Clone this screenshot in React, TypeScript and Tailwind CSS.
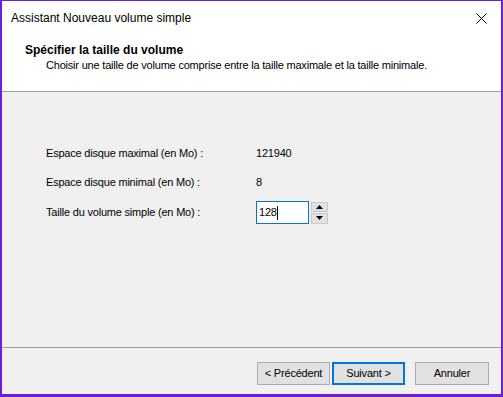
const font = { fontFamily: '"Liberation Sans", Arial, sans-serif' }

function Spinner() {
  return (
    <div className="flex flex-col gap-[1px] ml-[2px] h-[22px] w-[17px]">
      <button className="flex-1 flex items-center justify-center bg-[#e1e1e1] border border-[#c8c8c8]">
        <svg width="7" height="4" viewBox="0 0 7 4">
          <path d="M0 4 L3.5 0 L7 4 Z" fill="#000" />
        </svg>
      </button>
      <button className="flex-1 flex items-center justify-center bg-[#e1e1e1] border border-[#c8c8c8]">
        <svg width="7" height="4" viewBox="0 0 7 4">
          <path d="M0 0 L7 0 L3.5 4 Z" fill="#000" />
        </svg>
      </button>
    </div>
  )
}

function Row({ label, children }: { label: string; children: React.ReactNode }) {
  return (
    <div className="flex items-center">
      <div className="w-[210px]">{label}</div>
      {children}
    </div>
  )
}

export default function App() {
  return (
    <div
      className="w-[503px] h-[397px] bg-[#6b1fd6] pt-[1px] pl-[2px] pr-[2px] pb-[3px] text-[11px] tracking-[-0.2px] text-black"
      style={font}
    >
      <div className="h-full flex flex-col bg-[#f0f0f0]">
        <div className="h-[34px] bg-white flex items-center pl-[9px] pr-[14px] text-[12px] tracking-normal">
          <span className="flex-1">Assistant Nouveau volume simple</span>
          <svg width="11" height="11" viewBox="0 0 11 11">
            <path d="M0.5 0.5 L10.5 10.5 M10.5 0.5 L0.5 10.5" stroke="#000" strokeWidth="1" />
          </svg>
        </div>

        <div className="h-[57px] bg-white border-b border-[#a0a0a0] pl-[23px] pt-[8px]">
          <div className="font-bold text-[12px] tracking-normal h-[15px] leading-[15px]">
            Spécifier la taille du volume
          </div>
          <div className="pl-[21px] h-[15px] leading-[15px]">
            Choisir une taille de volume comprise entre la taille maximale et la taille minimale.
          </div>
        </div>

        <div className="flex-1 pl-[44px] pt-[51px] flex flex-col gap-[9px]">
          <div className="h-[20px] flex items-center">
            <Row label="Espace disque maximal (en Mo) :">121940</Row>
          </div>
          <div className="h-[20px] flex items-center">
            <Row label="Espace disque minimal (en Mo) :">8</Row>
          </div>
          <div className="h-[23px] flex items-center">
            <Row label="Taille du volume simple (en Mo) :">
              <div className="flex items-center">
                <div className="w-[53px] h-[23px] bg-white border border-[#0078d7] flex items-center pl-[2px]">
                  128<span className="w-[1px] h-[14px] bg-black" />
                </div>
                <Spinner />
              </div>
            </Row>
          </div>
        </div>

        <div className="h-[47px] border-t border-[#a0a0a0] flex items-start justify-end pr-[12px] pt-[14px]">
          <button className="w-[73px] h-[23px] bg-[#e1e1e1] border border-[#adadad]">&lt; Précédent</button>
          <button className="w-[73px] h-[23px] ml-[2px] bg-[#e1e1e1] border-2 border-[#0078d7]">Suivant &gt;</button>
          <button className="w-[74px] h-[23px] ml-[10px] bg-[#e1e1e1] border border-[#adadad]">Annuler</button>
        </div>
      </div>
    </div>
  )
}
